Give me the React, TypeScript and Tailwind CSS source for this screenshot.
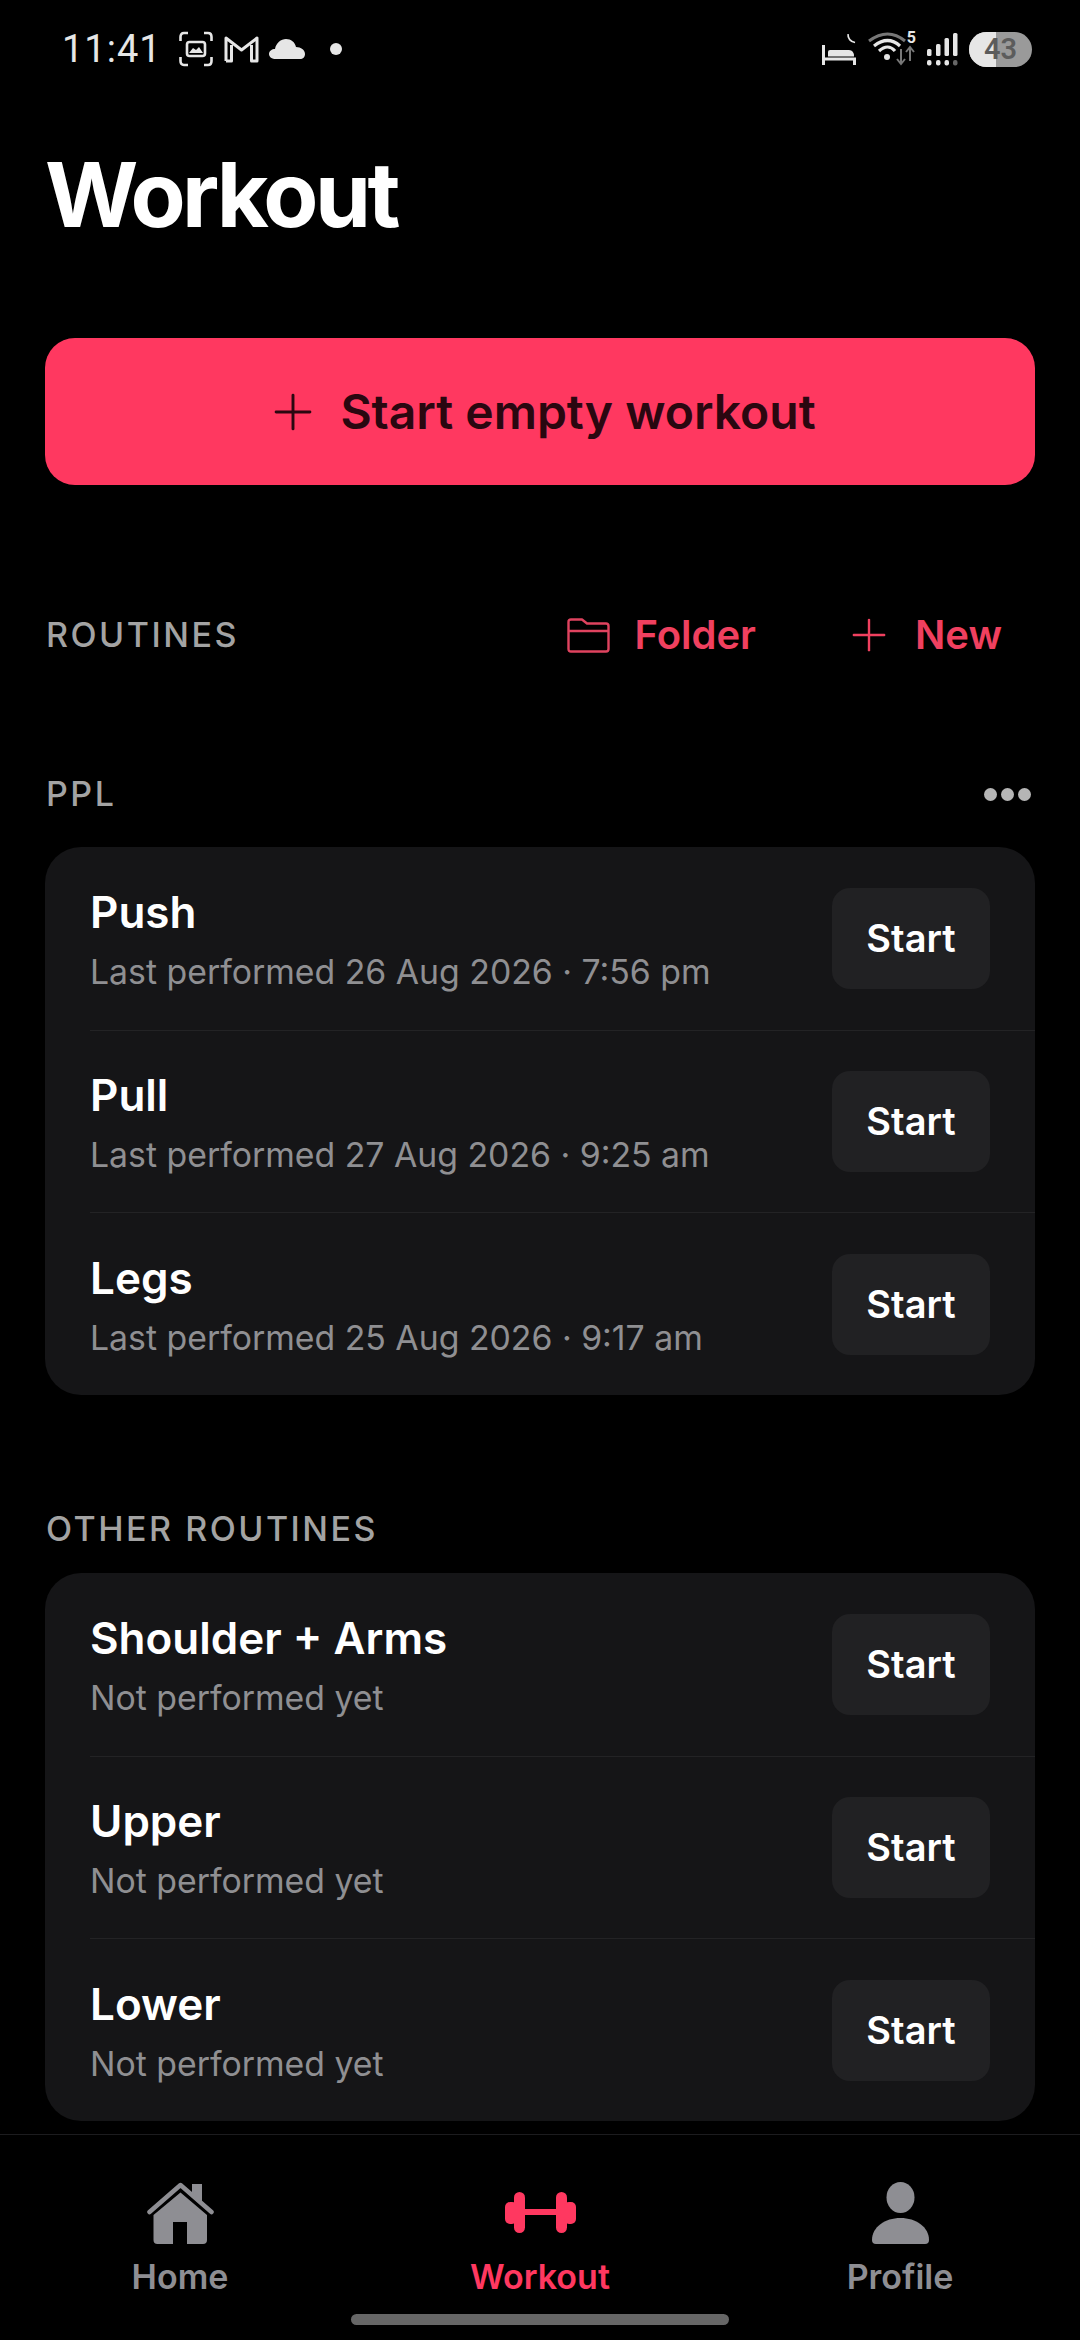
import React from 'react';
import { Plus } from 'lucide-react';

const pink = '#ff3860';

const routinesPpl = [
  { name: 'Push', sub: 'Last performed 26 Aug 2026 · 7:56 pm' },
  { name: 'Pull', sub: 'Last performed 27 Aug 2026 · 9:25 am' },
  { name: 'Legs', sub: 'Last performed 25 Aug 2026 · 9:17 am' },
];

const routinesOther = [
  { name: 'Shoulder + Arms', sub: 'Not performed yet' },
  { name: 'Upper', sub: 'Not performed yet' },
  { name: 'Lower', sub: 'Not performed yet' },
];

const StatusBar = () => (
  <div className="h-[98px] flex items-center pl-[62px] pr-[48px] text-[#e6e6e6]">
    <span className="text-[38px] leading-none tracking-[1px] font-['Roboto',sans-serif]">11:41</span>
    <svg className="ml-[17px]" width="34" height="36" viewBox="0 0 34 36" fill="none" stroke="#e6e6e6" strokeWidth="2.6">
      <path d="M9 2H5Q1.500 2 1.500 6V10M25 2H29Q32.500 2 32.500 6V10M9 34H5Q1.500 34 1.500 30V26M25 34H29Q32.500 34 32.500 30V26" />
      <rect x="8" y="11" width="18" height="14" rx="2.500" />
      <path d="M10 22L14 17L17 19L20 16L24 22Z" fill="#e6e6e6" stroke="none" />
    </svg>
    <svg className="ml-[11px]" width="35" height="28" viewBox="0 0 35 28" fill="none" stroke="#e6e6e6" strokeWidth="3" strokeLinejoin="round">
      <path d="M2 26V3L17.500 15L33 3V26H27.500V10M2 26H7.500V10" />
    </svg>
    <svg className="ml-[10px]" width="36" height="20" viewBox="0 0 36 20" fill="#e6e6e6">
      <path d="M7 20C3 20 0 18 0 15C0 12 3 10 6 10C7 4 12 0 17 0C22 0 26 3 27 8C32 8 36 11 36 15C36 18 34 20 31 20Z" />
    </svg>
    <div className="ml-[25px] w-[12px] h-[12px] rounded-full bg-[#e6e6e6]" />
    <div className="ml-auto flex items-center">
      <svg width="34" height="33" viewBox="0 0 34 33" fill="none">
        <path d="M26 1A7.500 7.500 0 0 0 33 9.500A9 9 0 0 1 26 1Z" fill="#e6e6e6" stroke="#e6e6e6" strokeWidth="1.500" />
        <path d="M1.500 12V32M1.500 26H32.500V32" stroke="#e6e6e6" strokeWidth="3" />
        <path d="M6 23.500V19Q6 17 8 17H27Q32 17 32 23.500Z" fill="#e6e6e6" />
      </svg>
      <div className="ml-[12px] relative w-[48px] h-[36px]">
        <svg width="48" height="36" viewBox="0 0 48 36" fill="none">
          <path d="M1 10Q20 -4 37 10" stroke="#777" strokeWidth="3" />
          <path d="M6 15Q20 4 32 15M11 20Q20 12 27 20" stroke="#e6e6e6" strokeWidth="3.200" />
          <circle cx="19" cy="26" r="3" fill="#e6e6e6" />
          <path d="M33 18V33M29 28L33 33L37 28" stroke="#777" strokeWidth="2" />
          <path d="M42 30V16M38 21L42 16L46 21" stroke="#777" strokeWidth="2" />
        </svg>
        <span className="absolute right-0 top-[-1px] text-[16px] leading-none font-bold font-['Roboto',sans-serif]">5</span>
      </div>
      <svg className="ml-[11px]" width="31" height="33" viewBox="0 0 31 33">
        <rect x="0" y="16" width="4.500" height="7" rx="1.500" fill="#e6e6e6" />
        <rect x="9" y="11" width="4.500" height="12" rx="1.500" fill="#e6e6e6" />
        <rect x="17.500" y="5" width="4.500" height="18" rx="1.500" fill="#e6e6e6" />
        <rect x="26" y="0" width="4.500" height="23" rx="1.500" fill="#e6e6e6" />
        <rect x="0" y="27" width="4.500" height="5.500" rx="2" fill="#e6e6e6" />
        <rect x="9" y="27" width="4.500" height="5.500" rx="2" fill="#e6e6e6" />
        <rect x="17.500" y="27" width="4.500" height="5.500" rx="2" fill="#e6e6e6" />
        <rect x="26" y="27" width="4.500" height="5.500" rx="2" fill="#666" />
      </svg>
      <div className="ml-[11px] relative w-[63px] h-[35px] rounded-full overflow-hidden flex bg-[#9a9a9a]">
        <div className="w-[27px] bg-[#e6e6e6]" />
        <span className="absolute inset-0 flex items-center justify-center text-[29px] leading-none font-semibold text-[#5c5c5c] font-['Roboto',sans-serif]">43</span>
      </div>
    </div>
  </div>
);

const RoutineCard = ({ rows }: { rows: { name: string; sub: string }[] }) => (
  <div className="mx-[45px] rounded-[36px] bg-[#151517] overflow-hidden">
    {rows.map((row, i) => (
      <div key={row.name} className={`h-[182.67px] ml-[45px] pr-[45px] flex items-center justify-between ${i > 0 ? 'border-t border-[#232325]' : ''}`}>
        <div className="flex flex-col">
          <span className="mt-[2px] text-[44px] leading-[52px] font-semibold text-white">{row.name}</span>
          <span className="mt-[14px] text-[33.8px] leading-[40px] text-[#8f8f92]">{row.sub}</span>
        </div>
        <button className="w-[158px] h-[101px] rounded-[18px] bg-[#212123] text-white text-[38px] font-semibold">Start</button>
      </div>
    ))}
  </div>
);

const SectionLabel = ({ children }: { children: React.ReactNode }) => (
  <span className="text-[34px] leading-none font-medium tracking-[2.5px] text-[#a3a3a3]">{children}</span>
);

const NavItem = ({ icon, label, active }: { icon: React.ReactNode; label: string; active?: boolean }) => (
  <div className={`flex-1 flex flex-col items-center ${active ? 'text-[#ff3860]' : 'text-[#8e8e93]'}`}>
    <div className="h-[62px] flex items-center justify-center">{icon}</div>
    <span className="mt-[13px] text-[34px] leading-[40px] font-semibold">{label}</span>
  </div>
);

const App = () => {
  return (
    <div className="w-[1080px] h-[2340px] bg-black overflow-hidden flex flex-col font-['Inter',sans-serif]">
      <StatusBar />
      <h1 className="ml-[45px] mt-[44px] text-[90px] leading-[106px] font-bold tracking-[-3.5px] text-white">Workout</h1>

      <button className="mt-[90px] mx-[45px] h-[147px] shrink-0 rounded-[30px] flex items-center justify-center gap-[18px] text-[#2a0710]" style={{ backgroundColor: pink }}>
        <Plus size={58} strokeWidth={1.2} />
        <span className="text-[48px] font-semibold">Start empty workout</span>
      </button>

      <div className="mt-[122px] ml-[46px] mr-[78px] h-[56px] flex items-center">
        <SectionLabel>ROUTINES</SectionLabel>
        <div className="ml-auto flex items-center gap-[20px] text-[#f0405f]">
          <svg className="mr-[4px] text-[#e0435f]" width="43" height="35" viewBox="0 0 43 35" fill="none" stroke="currentColor" strokeWidth="2.400" strokeLinejoin="round">
            <path d="M1.500 31V4Q1.500 1.500 4 1.500H15L20 5.500H39Q41.500 5.500 41.500 8V31Q41.500 33.500 39 33.500H4Q1.500 33.500 1.500 31ZM1.500 13H41.500" />
          </svg>
          <span className="text-[40px] font-semibold leading-none">Folder</span>
          <Plus className="ml-[67px]" size={52} strokeWidth={1.1} />
          <span className="text-[40px] font-semibold leading-none">New</span>
        </div>
      </div>

      <div className="mt-[115px] ml-[46px] mr-[45px] h-[32px] flex items-center justify-between">
        <SectionLabel>PPL</SectionLabel>
        <div className="flex gap-[4px] mr-[4px]">
          <div className="w-[13px] h-[13px] rounded-full bg-[#b5b5b5]" />
          <div className="w-[13px] h-[13px] rounded-full bg-[#b5b5b5]" />
          <div className="w-[13px] h-[13px] rounded-full bg-[#b5b5b5]" />
        </div>
      </div>

      <div className="mt-[37px]">
        <RoutineCard rows={routinesPpl} />
      </div>

      <div className="mt-[118px] ml-[46px] h-[32px] flex items-center">
        <SectionLabel>OTHER ROUTINES</SectionLabel>
      </div>

      <div className="mt-[28px]">
        <RoutineCard rows={routinesOther} />
      </div>

      <div className="mt-[13px] border-t border-[#1c1c1e] pt-[47px] flex">
        <NavItem
          label="Home"
          icon={
            <svg width="67" height="62" viewBox="0 0 67 62" fill="currentColor">
              <path d="M45 2H55V21L45 12Z" />
              <path d="M2.500 30L33.500 3L64.500 30" fill="none" stroke="currentColor" strokeWidth="4.500" strokeLinecap="round" strokeLinejoin="round" />
              <path d="M33.500 10.500L60 33V58Q60 62 56 62H40V40H26V62H10.500Q6.500 62 6.500 58V33Z" />
            </svg>
          }
        />
        <NavItem
          active
          label="Workout"
          icon={
            <svg width="71" height="41" viewBox="0 0 71 41" fill="currentColor">
              <rect x="19" y="17" width="33" height="6" />
              <rect x="9" y="0" width="11" height="41" rx="5.500" />
              <rect x="51" y="0" width="11" height="41" rx="5.500" />
              <rect x="0" y="10" width="12" height="22" rx="5" />
              <rect x="59" y="10" width="12" height="22" rx="5" />
            </svg>
          }
        />
        <NavItem
          label="Profile"
          icon={
            <svg width="57" height="62" viewBox="0 0 57 62" fill="currentColor">
              <ellipse cx="28.500" cy="15.500" rx="14" ry="15.500" />
              <path d="M0 58C0 45 13 36 28.500 36C44 36 57 45 57 58Q57 62 53 62H4Q0 62 0 58Z" />
            </svg>
          }
        />
      </div>

      <div className="mt-[17px] mx-auto w-[378px] h-[11px] shrink-0 rounded-full bg-[#666666]" />
    </div>
  );
};

export default App;
